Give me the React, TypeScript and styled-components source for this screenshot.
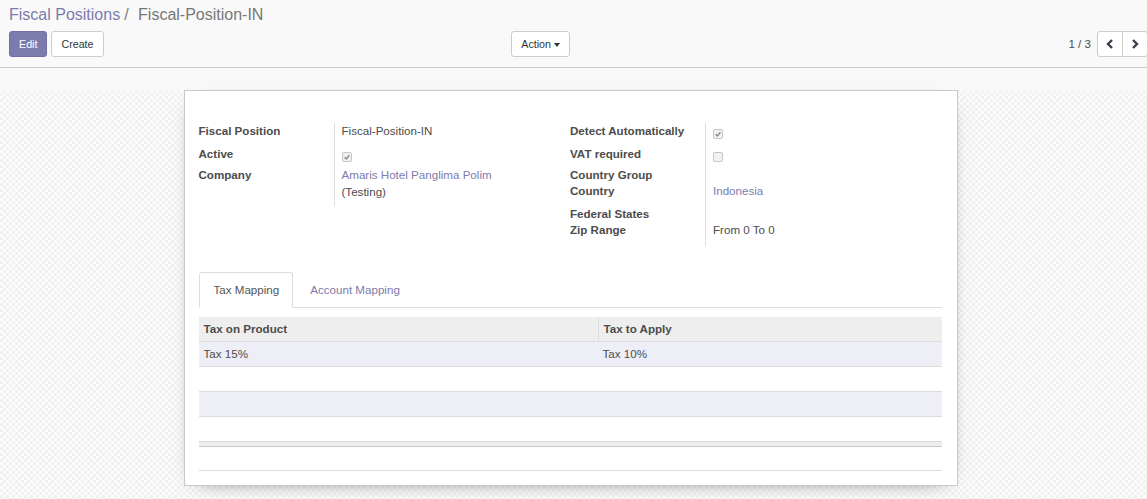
import React from "react";
import styled, { createGlobalStyle } from "styled-components";

const GlobalStyle = createGlobalStyle`
  html, body { margin: 0; padding: 0; }
  body {
    font-family: "Liberation Sans", Arial, sans-serif;
    font-size: 11.6px;
    line-height: 16.5px;
    color: #4c4c4c;
    background: #f9f9f9;
    overflow: hidden;
  }
  * { box-sizing: border-box; }
`;

const Page = styled.div`
  display: flex;
  flex-direction: column;
  min-height: 499px;
`;

const ControlPanel = styled.div`
  display: flex;
  flex-direction: column;
  gap: 5px;
  padding: 4px 0 10px 9px;
  background: #f9f9f9;
  border-bottom: 1px solid #c8c8c8;
`;

const Breadcrumbs = styled.div`
  display: flex;
  align-items: center;
  height: 22px;
  font-size: 16px;
  line-height: 22px;
`;

const Crumb = styled.span<{ $active?: boolean }>`
  color: ${(p) => (p.$active ? "#777777" : "#7c7bad")};
`;

const Sep = styled.span`
  color: #7a7a7a;
  padding: 0 5px 0 4px;
  white-space: pre;
`;

const ButtonsRow = styled.div`
  display: flex;
  align-items: center;
  height: 26px;
`;

const CpLeft = styled.div`
  width: 50%;
  display: flex;
  align-items: center;
  gap: 4px;
  padding-right: 8px;
`;

const CpRight = styled.div`
  flex: 1;
  display: flex;
  justify-content: flex-end;
  align-items: center;
  margin-right: -1px;
`;

const Btn = styled.button<{ $primary?: boolean }>`
  height: 26px;
  padding: 0 9px;
  font-family: inherit;
  font-size: 10.7px;
  line-height: 24px;
  border-radius: 3px;
  border: 1px solid ${(p) => (p.$primary ? "#7270a6" : "#cccccc")};
  background: ${(p) => (p.$primary ? "#7c7bad" : "#ffffff")};
  color: ${(p) => (p.$primary ? "#ffffff" : "#333333")};
  cursor: pointer;
  display: inline-flex;
  align-items: center;
`;

const ActionBtn = styled(Btn)`
  margin-left: auto;
  gap: 3px;
`;

const Caret = styled.span`
  width: 0;
  height: 0;
  border-top: 4px solid #333;
  border-left: 3.5px solid transparent;
  border-right: 3.5px solid transparent;
  margin-top: 1px;
`;

const PagerValue = styled.span`
  margin-right: 6px;
  color: #4c4c4c;
  font-size: 11.6px;
`;

const PagerGroup = styled.div`
  display: flex;
`;

const PagerBtn = styled.button<{ $side: "left" | "right" }>`
  width: 26px;
  height: 26px;
  padding: 0;
  background: #fff;
  border: 1px solid #cccccc;
  border-radius: ${(p) => (p.$side === "left" ? "3px 0 0 3px" : "0 3px 3px 0")};
  margin-left: ${(p) => (p.$side === "right" ? "-1px" : "0")};
  display: flex;
  align-items: center;
  justify-content: center;
  cursor: pointer;
`;

const PlainBand = styled.div`
  height: 22px;
  background: #f9f9f9;
`;

const SheetBg = styled.div`
  flex: 1;
  display: flex;
  justify-content: center;
  padding: 0 6px 14px 0;
  background-color: #f8f8f8;
  background-image: repeating-conic-gradient(#f1f1f1 0 25%, #fbfbfb 0 50%);
  background-size: 6px 6px;
`;

const Sheet = styled.div`
  width: 774px;
  background: #ffffff;
  border: 1px solid #c8c8d3;
  box-shadow: 0 5px 20px -15px #000;
  padding: 32px 15px 14px 14px;
  display: flex;
  flex-direction: column;
`;

const Groups = styled.div`
  display: grid;
  grid-template-columns: 1fr 1fr;
  align-items: start;
`;

const Group = styled.div`
  display: flex;
  flex-direction: column;
`;

const FieldRow = styled.div<{ $h: number }>`
  display: grid;
  grid-template-columns: 136px 1fr;
  height: ${(p) => p.$h}px;
`;

const Label = styled.div`
  font-weight: bold;
  color: #4c4c4c;
  border-right: 1px solid #dddddd;
  white-space: nowrap;
`;

const Value = styled.div`
  padding-left: 7px;
  color: #4c4c4c;
`;

const Link = styled.span`
  color: #7c7bad;
`;

const CheckBox = styled.span`
  display: block;
  margin-top: 6px;
  width: 10px;
  height: 10px;
  border: 1px solid #c6c6c6;
  border-radius: 2px;
  background: #f2f2f2;
  position: relative;
  svg { position: absolute; left: 0; top: 0; }
`;

const Tabs = styled.div`
  display: flex;
  margin-top: 26px;
  border-bottom: 1px solid #dddddd;
`;

const Tab = styled.div<{ $active?: boolean }>`
  padding: 9px 13px 9px 14px;
  line-height: 16px;
  margin-bottom: -1px;
  margin-right: 2px;
  border: 1px solid ${(p) => (p.$active ? "#dddddd" : "transparent")};
  border-bottom-color: ${(p) => (p.$active ? "#ffffff" : "transparent")};
  border-radius: 3px 3px 0 0;
  background: ${(p) => (p.$active ? "#ffffff" : "transparent")};
  color: ${(p) => (p.$active ? "#555555" : "#7c7bad")};
  cursor: pointer;
`;

const Table = styled.div`
  margin-top: 9px;
  display: flex;
  flex-direction: column;
`;

const HeadRow = styled.div`
  display: grid;
  grid-template-columns: 399px 1fr;
  height: 25px;
  background: #eeeeee;
  border-bottom: 1px solid #dddddd;
`;

const HeadCell = styled.div<{ $divider?: boolean }>`
  font-weight: bold;
  line-height: 24px;
  padding: 0 4px 0 5px;
  border-left: ${(p) => (p.$divider ? "1px solid #dddddd" : "none")};
  color: #4c4c4c;
`;

const BodyRow = styled.div<{ $striped?: boolean }>`
  display: grid;
  grid-template-columns: 399px 1fr;
  height: 25px;
  background: ${(p) => (p.$striped ? "#eeeef6" : "#ffffff")};
  border-bottom: 1px solid #dddddd;
`;

const BodyCell = styled.div`
  line-height: 24px;
  padding: 0 4px 0 5px;
  color: #4c4c4c;
`;

const TableFoot = styled.div`
  height: 5px;
  background: #eeeeee;
  border-bottom: 1px solid #c8c8c8;
`;

const TrailingLine = styled.div`
  height: 24px;
  border-bottom: 1px solid #dddddd;
`;

const Chevron = ({ dir }: { dir: "left" | "right" }) => (
  <svg width="8" height="10" viewBox="0 0 8 10">
    <polyline
      points={dir === "left" ? "6,1 2,5 6,9" : "2,1 6,5 2,9"}
      fill="none"
      stroke="#3d3d4a"
      strokeWidth="2.4"
    />
  </svg>
);

const Check = ({ checked }: { checked?: boolean }) => (
  <CheckBox>
    {checked && (
      <svg width="8" height="8" viewBox="0 0 8 8">
        <polyline points="1.6,4.2 3.3,5.9 6.4,2.2" fill="none" stroke="#8c8c8c" strokeWidth="1.5" />
      </svg>
    )}
  </CheckBox>
);

type Field = { label: string; h: number; value?: React.ReactNode };

const leftFields: Field[] = [
  { label: "Fiscal Position", h: 23, value: "Fiscal-Position-IN" },
  { label: "Active", h: 21, value: <Check checked /> },
  {
    label: "Company",
    h: 39,
    value: (
      <>
        <Link>Amaris Hotel Panglima Polim</Link>
        <br />
        (Testing)
      </>
    ),
  },
];

const rightFields: Field[] = [
  { label: "Detect Automatically", h: 23, value: <Check checked /> },
  { label: "VAT required", h: 21, value: <Check /> },
  { label: "Country Group", h: 16 },
  { label: "Country", h: 23, value: <Link>Indonesia</Link> },
  { label: "Federal States", h: 16 },
  { label: "Zip Range", h: 24, value: "From 0 To 0" },
];

const FieldGroup = ({ fields }: { fields: Field[] }) => (
  <Group>
    {fields.map((f) => (
      <FieldRow key={f.label} $h={f.h}>
        <Label>{f.label}</Label>
        <Value>{f.value}</Value>
      </FieldRow>
    ))}
  </Group>
);

export default function App() {
  return (
    <>
      <GlobalStyle />
      <Page>
        <ControlPanel>
          <Breadcrumbs>
            <Crumb>Fiscal Positions</Crumb>
            <Sep>/ </Sep>
            <Crumb $active>Fiscal-Position-IN</Crumb>
          </Breadcrumbs>
          <ButtonsRow>
            <CpLeft>
              <Btn $primary>Edit</Btn>
              <Btn>Create</Btn>
              <ActionBtn>
                Action <Caret />
              </ActionBtn>
            </CpLeft>
            <CpRight>
              <PagerValue>1 / 3</PagerValue>
              <PagerGroup>
                <PagerBtn $side="left">
                  <Chevron dir="left" />
                </PagerBtn>
                <PagerBtn $side="right">
                  <Chevron dir="right" />
                </PagerBtn>
              </PagerGroup>
            </CpRight>
          </ButtonsRow>
        </ControlPanel>
        <PlainBand />
        <SheetBg>
          <Sheet>
            <Groups>
              <FieldGroup fields={leftFields} />
              <FieldGroup fields={rightFields} />
            </Groups>
            <Tabs>
              <Tab $active>Tax Mapping</Tab>
              <Tab>Account Mapping</Tab>
            </Tabs>
            <Table>
              <HeadRow>
                <HeadCell>Tax on Product</HeadCell>
                <HeadCell $divider>Tax to Apply</HeadCell>
              </HeadRow>
              <BodyRow $striped>
                <BodyCell>Tax 15%</BodyCell>
                <BodyCell>Tax 10%</BodyCell>
              </BodyRow>
              <BodyRow />
              <BodyRow $striped />
              <BodyRow />
              <TableFoot />
              <TrailingLine />
            </Table>
          </Sheet>
        </SheetBg>
      </Page>
    </>
  );
}
